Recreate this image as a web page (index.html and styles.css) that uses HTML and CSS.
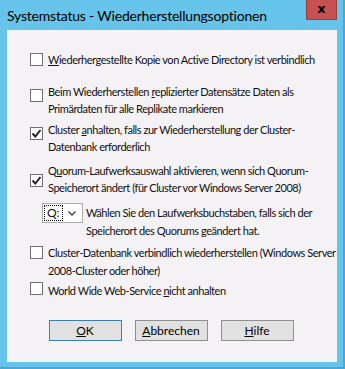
FILE: index.html
```html
<!DOCTYPE html>
<html lang="de">
<head>
    <meta charset="UTF-8">
    <title>Systemstatus - Wiederherstellungsoptionen</title>
    <link rel="stylesheet" href="styles.css">
</head>
<body>
    <div class="window">
        <div class="titlebar">
            <span class="caption">Systemstatus - Wiederherstellungsoptionen</span>
            <div class="close">x</div>
        </div>

        <div class="client">
            <div class="options">
                <div class="opt opt-ad">
                    <span class="check c-top"></span>
                    <span class="label"><u>W</u>iederhergestellte Kopie von Active Directory ist verbindlich</span>
                </div>

                <div class="opt opt-primary">
                    <span class="check c-mid"></span>
                    <span class="label">Beim Wiederherstellen <u>r</u>eplizierter Datensätze Daten als<br>Primärdaten für alle Replikate markieren</span>
                </div>

                <div class="opt opt-cluster">
                    <span class="check c-mid checked">
                        <svg viewBox="0 0 11 11" width="11" height="11"><path d="M1.5 5.5 L4.3 8.5 L9.5 2" fill="none" stroke="#222" stroke-width="2"/></svg>
                    </span>
                    <span class="label">Cluster <u>a</u>nhalten, falls zur Wiederherstellung der Cluster-<br>Datenbank erforderlich</span>
                </div>

                <div class="opt opt-quorum">
                    <span class="check c-low checked">
                        <svg viewBox="0 0 11 11" width="11" height="11"><path d="M1.5 5.5 L4.3 8.5 L9.5 2" fill="none" stroke="#222" stroke-width="2"/></svg>
                    </span>
                    <span class="label">Q<u>u</u>orum-Laufwerksauswahl aktivieren, wenn sich Quorum-<br>Speicherort ändert (für Cluster vor Windows Server 2008)</span>
                </div>

                <div class="drive-row">
                    <div class="combo">
                        <span class="combo-value">Q:</span>
                        <svg class="chevron" viewBox="0 0 8 5" width="8" height="5"><path d="M0.5 0.5 L4 4 L7.5 0.5" fill="none" stroke="#444" stroke-width="1.4"/></svg>
                    </div>
                    <span class="label">Wählen Sie den Laufwerksbuchstaben, falls sich der<br>Speicherort des Quorums geändert hat.</span>
                </div>

                <div class="opt opt-db">
                    <span class="check c-top"></span>
                    <span class="label">Cluster-Datenbank verbindlich wiederherstellen (Windows Server<br>2008-Cluster oder höher)</span>
                </div>

                <div class="opt opt-www">
                    <span class="check"></span>
                    <span class="label">World Wide Web-Service <u>n</u>icht anhalten</span>
                </div>
            </div>

            <div class="buttons">
                <button type="button" class="btn default"><u>O</u>K</button>
                <button type="button" class="btn"><u>A</u>bbrechen</button>
                <button type="button" class="btn"><u>H</u>ilfe</button>
            </div>
        </div>
    </div>
</body>
</html>
```

FILE: styles.css
```css
html, body {
    margin: 0;
    padding: 0;
}

body {
    width: 345px;
    height: 369px;
    overflow: hidden;
    font-family: Lato, "Noto Sans", sans-serif;
    color: #000;
}

.window {
    box-sizing: border-box;
    width: 345px;
    height: 369px;
    background-color: #66c4ea;
    border-right: 2px solid #4aa6d4;
    border-bottom: 2px solid #4aa6d4;
    display: flex;
    flex-direction: column;
}

.titlebar {
    height: 30px;
    display: flex;
    align-items: flex-start;
    justify-content: space-between;
    padding-left: 7px;
}

.caption {
    margin-top: 7px;
    font-size: 14px;
    line-height: 18px;
    letter-spacing: -0.2px;
    color: #000;
}

.close {
    width: 31px;
    height: 20px;
    margin-right: 6px;
    box-sizing: border-box;
    background-color: #c75050;
    border: 1px solid #9a3d3d;
    border-top: 0;
    color: #000;
    font-weight: bold;
    font-size: 13px;
    line-height: 17px;
    text-align: center;
    font-family: "DejaVu Sans", sans-serif;
}

.client {
    flex: 1;
    margin: 0 6px 5px 7px;
    background-color: #f5f2f5;
    display: flex;
    flex-direction: column;
}

.options {
    padding-left: 23px;
    display: flex;
    flex-direction: column;
    font-size: 11px;
    letter-spacing: -0.45px;
    line-height: 17px;
    color: #111;
}

.opt {
    display: flex;
    align-items: flex-start;
    gap: 5px;
}

.label {
    white-space: nowrap;
}

.opt-ad { margin-top: 21px; }
.opt-primary { margin-top: 15px; }
.opt-cluster { margin-top: 4px; }
.opt-quorum { margin-top: 7px; }
.drive-row { margin-top: 8px; line-height: 18px; }
.opt-db { margin-top: 4px; line-height: 18px; }
.opt-www { margin-top: 2px; }

.check {
    flex: none;
    box-sizing: border-box;
    width: 13px;
    height: 13px;
    border: 1px solid #707070;
    background-color: #fff;
    display: flex;
    align-items: center;
    justify-content: center;
}

.c-top { margin-top: 2px; }
.c-mid { margin-top: 6px; }
.c-low { margin-top: 12px; }

.drive-row {
    display: flex;
    align-items: flex-start;
    padding-left: 12px;
    gap: 3px;
}

.combo {
    flex: none;
    box-sizing: border-box;
    width: 41px;
    height: 20px;
    margin-top: -1px;
    border: 1px solid #acacac;
    background-color: #fff;
    display: flex;
    align-items: center;
    justify-content: space-between;
    padding: 0 6px 0 1px;
}

.combo-value {
    border: 1px dotted #000;
    line-height: 14px;
    padding: 0 2px;
    font-size: 12px;
    letter-spacing: 0;
}

.chevron {
    margin-top: 1px;
}

.buttons {
    margin-top: auto;
    margin-bottom: 21px;
    display: flex;
    justify-content: center;
    gap: 13px;
    padding-right: 2px;
}

.btn {
    box-sizing: border-box;
    width: 73px;
    height: 21px;
    padding: 0;
    background-color: #e1e1e1;
    border: 1px solid #8f8f8f;
    font-family: Lato, "Noto Sans", sans-serif;
    font-size: 12px;
    color: #000;
}

.btn.default {
    border-color: #3c7fb1;
}
```
